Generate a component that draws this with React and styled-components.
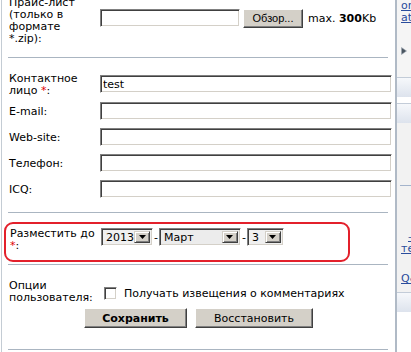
import React from "react";
import styled, { createGlobalStyle } from "styled-components";

const Global = createGlobalStyle`
  html, body { margin: 0; padding: 0; background: #fff; overflow: hidden; }
  body { font-family: "DejaVu Sans", Verdana, sans-serif; font-size: 11px; color: #000; }
`;

const Page = styled.div`
  display: flex;
  width: 411px;
  height: 352px;
  overflow: hidden;
  background: #fff;
`;

const LeftEdge = styled.div`
  flex: none;
  width: 2px;
  box-sizing: border-box;
  border-right: 1px solid #c4ccd4;
`;

const Main = styled.div`
  flex: none;
  width: 390px;
  overflow: hidden;
`;

const Scroller = styled.div`
  display: flex;
  flex-direction: column;
  margin-top: -5px;
`;

const Row = styled.div`
  display: grid;
  grid-template-columns: ${(p) => p.$col || 98}px 1fr;
  align-items: center;
  height: ${(p) => p.$h}px;
`;

const Label = styled.div`
  padding: 2px 0 0 ${(p) => p.$pl ?? 7}px;
  line-height: 12px;
  white-space: nowrap;
`;

const Star = styled.span`
  color: #e00000;
`;

const Control = styled.div`
  display: flex;
  align-items: center;
  margin-bottom: ${(p) => p.$mb || 0}px;
  margin-top: ${(p) => p.$mt || 0}px;
  white-space: nowrap;
`;

const Fields = styled.div`
  display: flex;
  flex-direction: column;
  gap: 8px;
`;

const Divider = styled.div`
  height: 1px;
  background: #aab5c1;
  margin: ${(p) => p.$mt}px 4px ${(p) => p.$mb}px 6px;
`;

const TextInput = styled.input`
  box-sizing: border-box;
  flex: none;
  height: 18px;
  width: ${(p) => p.$w}px;
  margin: 0;
  padding: 0 2px;
  border: 1px solid;
  border-color: #808080 #ffffff #ffffff #808080;
  box-shadow: inset 1px 1px 0 #404040, inset -1px -1px 0 #d4d0c8;
  background: #fff;
  font: 11px "DejaVu Sans", Verdana, sans-serif;
  color: #000;
  outline: none;
`;

const ClassicButton = styled.button`
  box-sizing: border-box;
  flex: none;
  height: ${(p) => p.$h || 20}px;
  width: ${(p) => p.$w}px;
  margin: 0;
  padding: 0;
  background: #d4d0c8;
  border: 1px solid;
  border-color: #ffffff #404040 #404040 #ffffff;
  box-shadow: inset -1px -1px 0 #808080;
  font-family: ${(p) => (p.$system ? '"Liberation Sans", Arial, sans-serif' : '"DejaVu Sans", Verdana, sans-serif')};
  font-size: 11px;
  font-weight: ${(p) => (p.$bold ? 700 : 400)};
  color: #000;
`;

const Note = styled.span`
  margin-left: 5px;
  font-size: 11px;
  b { font-weight: 700; }
`;

const Highlight = styled.div`
  box-sizing: border-box;
  width: 346px;
  margin-left: 2px;
  border: 2px solid #e3202b;
  border-radius: 9px;
  padding: 2px 0 8px;
`;

const Select = styled.div`
  box-sizing: border-box;
  flex: none;
  display: flex;
  align-items: stretch;
  height: 18px;
  width: ${(p) => p.$w}px;
  padding: 2px;
  border: 1px solid;
  border-color: #808080 #ffffff #ffffff #808080;
  box-shadow: inset 1px 1px 0 #404040, inset -1px -1px 0 #d4d0c8;
  background: ${(p) => p.$bg || "#f0f0f0"};
`;

const SelectText = styled.span`
  flex: 1;
  padding-left: 2px;
  line-height: 14px;
  font-size: 11px;
`;

const SelectButton = styled.span`
  box-sizing: border-box;
  flex: none;
  width: 16px;
  display: flex;
  align-items: center;
  justify-content: center;
  background: #d4d0c8;
  border: 1px solid;
  border-color: #d4d0c8 #404040 #404040 #d4d0c8;
  box-shadow: inset 1px 1px 0 #fff, inset -1px -1px 0 #808080;
`;

const Dash = styled.span`
  margin: 0 1px;
  font-size: 11px;
`;

const Checkbox = styled.span`
  box-sizing: border-box;
  flex: none;
  width: 13px;
  height: 13px;
  margin-left: 4px;
  border: 1px solid;
  border-color: #808080 #ffffff #ffffff #808080;
  box-shadow: inset 1px 1px 0 #404040, inset -1px -1px 0 #d4d0c8;
  background: #fff;
`;

const CheckText = styled.span`
  margin-left: 7px;
`;

const Actions = styled.div`
  display: flex;
  justify-content: center;
  gap: 8px;
  padding-left: 3px;
  margin-top: 4px;
`;

/* ---------- sidebar ---------- */
const Sidebar = styled.div`
  flex: none;
  width: 200px;
  margin-left: 3px;
  border-left: 2px solid #b0bac6;
  display: flex;
  flex-direction: column;
  background: #fff;
`;

const SideTop = styled.div`
  height: 77px;
  background: #f5f5f5;
  padding: 0 0 0 4px;
  box-sizing: border-box;
  line-height: 12px;
`;

const SideLink = styled.a`
  display: block;
  color: #2a4c9c;
  text-decoration: underline;
  font-size: 11px;
  line-height: 12px;
  white-space: nowrap;
  padding-left: ${(p) => p.$indent || 0}px;
`;

const Marker = styled.div`
  margin-top: 22px;
  height: 8px;
`;

const Band = styled.div`
  height: 20px;
  box-sizing: border-box;
  border-top: 1px solid #c3ccd8;
  background: linear-gradient(#f6f8fb, #dde3ed);
`;

const SideGap = styled.div`
  height: 6px;
  background: #fff;
`;

const SideBody = styled.div`
  height: 169px;
  background: #f2f2f2;
  padding: 62px 0 0 4px;
  box-sizing: border-box;
`;

const SideRule = styled.div`
  height: 1px;
  width: 60px;
  margin-left: -1px;
  background: #a4b4cc;
`;

const SideLinks = styled.div`
  margin-top: 45px;
`;

const Down = () => (
  <svg width="7" height="4" viewBox="0 0 7 4">
    <path d="M0 0h7L3.5 4z" fill="#000" />
  </svg>
);

const DateSelect = ({ w, value, bg }) => (
  <Select $w={w} $bg={bg}>
    <SelectText>{value}</SelectText>
    <SelectButton>
      <Down />
    </SelectButton>
  </Select>
);

export default function App() {
  return (
    <>
      <Global />
      <Page>
        <LeftEdge />
        <Main>
          <Scroller>
            <Row $h={50}>
              <Label>
                Прайс-лист
                <br />
                (только в
                <br />
                формате
                <br />
                *.zip):
              </Label>
              <Control $mb={4}>
                <TextInput $w={140} />
                <ClassicButton $w={60} $h={19} $system style={{ marginLeft: 3 }}>
                  Обзор...
                </ClassicButton>
                <Note>
                  max. <b>300</b>Kb
                </Note>
              </Control>
            </Row>

            <Divider $mt={12} $mb={13} />

            <Fields>
              <Row $h={23}>
                <Label>
                  Контактное
                  <br />
                  лицо <Star>*</Star>:
                </Label>
                <Control>
                  <TextInput $w={292} defaultValue="test" />
                </Control>
              </Row>
              <Row $h={18}>
                <Label>E-mail:</Label>
                <Control>
                  <TextInput $w={292} />
                </Control>
              </Row>
              <Row $h={18}>
                <Label>Web-site:</Label>
                <Control>
                  <TextInput $w={292} />
                </Control>
              </Row>
              <Row $h={18}>
                <Label>Телефон:</Label>
                <Control>
                  <TextInput $w={292} />
                </Control>
              </Row>
              <Row $h={18}>
                <Label>ICQ:</Label>
                <Control>
                  <TextInput $w={292} />
                </Control>
              </Row>
            </Fields>

            <Divider $mt={14} $mb={9} />

            <Highlight>
              <Row $h={26} $col={95}>
                <Label $pl={4}>
                  Разместить до
                  <br />
                  <Star>*</Star>:
                </Label>
                <Control $mb={4}>
                  <DateSelect w={52} value="2013" />
                  <Dash>-</Dash>
                  <DateSelect w={82} value="Март" bg="#ececec" />
                  <Dash>-</Dash>
                  <DateSelect w={37} value="3" />
                </Control>
              </Row>
            </Highlight>

            <Divider $mt={2} $mb={13} />

            <Row $h={26}>
              <Label>
                Опции
                <br />
                пользователя:
              </Label>
              <Control $mt={5}>
                <Checkbox />
                <CheckText>Получать извещения о комментариях</CheckText>
              </Control>
            </Row>

            <Actions>
              <ClassicButton $w={103} $bold>
                Сохранить
              </ClassicButton>
              <ClassicButton $w={118}>Восстановить</ClassicButton>
            </Actions>

            <Divider $mt={21} $mb={0} />
          </Scroller>
        </Main>

        <Sidebar>
          <SideTop>
            <SideLink>order form</SideLink>
            <SideLink>attach</SideLink>
            <Marker>
              <svg width="6" height="8" viewBox="0 0 6 8">
                <path d="M0.5 0.5L5.5 4L0.5 7.5z" fill="#4a5560" stroke="#9aa4ae" strokeWidth="0.6" />
              </svg>
            </Marker>
          </SideTop>
          <Band />
          <SideGap />
          <Band />
          <SideBody>
            <SideRule />
            <SideLinks>
              <SideLink $indent={7}>— ссылка</SideLink>
              <SideLink>темы</SideLink>
              <SideLink style={{ marginTop: 18 }}>Q&amp;A</SideLink>
            </SideLinks>
          </SideBody>
          <Band />
        </Sidebar>
      </Page>
    </>
  );
}
